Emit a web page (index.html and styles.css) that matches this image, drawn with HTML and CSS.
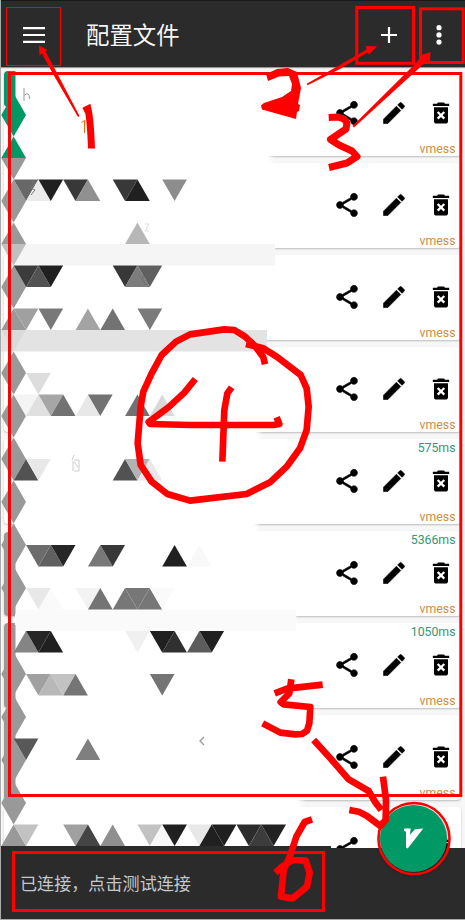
FILE: index.html
```html
<!DOCTYPE html>
<html lang="zh-CN">
<head>
<meta charset="utf-8">
<title>配置文件</title>
<link rel="stylesheet" href="styles.css">
</head>
<body>
<svg class="defs" width="0" height="0">
  <symbol id="share" viewBox="0 0 24 24"><path stroke="#000" stroke-width=".5" d="M18 16.08c-.76 0-1.44.3-1.96.77L8.91 12.7c.05-.23.09-.46.09-.7s-.04-.47-.09-.7l7.05-4.11c.54.5 1.25.81 2.04.81 1.66 0 3-1.34 3-3s-1.34-3-3-3-3 1.34-3 3c0 .24.04.47.09.7L8.04 9.81C7.5 9.31 6.79 9 6 9c-1.66 0-3 1.34-3 3s1.34 3 3 3c.79 0 1.5-.31 2.04-.81l7.12 4.16c-.05.21-.08.43-.08.65 0 1.61 1.31 2.92 2.92 2.92s2.92-1.31 2.92-2.92-1.31-2.92-2.92-2.92z"/></symbol>
  <symbol id="edit" viewBox="0 0 24 24"><path stroke="#000" stroke-width=".5" d="M3 17.25V21h3.75L17.81 9.94l-3.75-3.75L3 17.25zM20.71 7.04c.39-.39.39-1.02 0-1.41l-2.34-2.34c-.39-.39-1.02-.39-1.41 0l-1.83 1.83 3.75 3.75 1.83-1.83z"/></symbol>
  <symbol id="trash" viewBox="0 0 24 24"><path d="M6 19c0 1.1.9 2 2 2h8c1.1 0 2-.9 2-2V7H6v12zm2.46-7.12l1.41-1.41L12 12.59l2.12-2.12 1.41 1.41L13.41 14l2.12 2.12-1.41 1.41L12 15.41l-2.12 2.12-1.41-1.41L10.59 14l-2.13-2.12zM15.5 4l-1-1h-5l-1 1H5v2h14V4z"/></symbol>
</svg>
<div class="app">
  <header class="bar">
    <svg class="menu" viewBox="0 0 22 16"><path d="M0 1.2h22M0 8h22M0 14.8h22"/></svg>
    <h1>配置文件</h1>
    <svg class="plus" viewBox="0 0 16 16"><path d="M8 0v16M0 8h16"/></svg>
    <svg class="more" viewBox="0 0 6 20"><circle cx="3" cy="2.7" r="2.6"/><circle cx="3" cy="9.9" r="2.6"/><circle cx="3" cy="17.1" r="2.6"/></svg>
  </header>
  <main class="list" id="list"></main>
  <footer class="status">已连接，点击测试连接</footer>
  <svg class="layer" id="mosaic" viewBox="0 0 465 848"></svg>
  <button class="fab"><svg viewBox="0 0 60 62"><path d="M0 8V1H20L18 20L33 3L58 1L11 61L6 58V11Z"/></svg></button>
  <svg class="layer marks" viewBox="0 0 465 920">
    <rect x="6.5" y="7.5" width="54" height="58" stroke-width="1"/>
    <rect x="356.8" y="7.5" width="56.7" height="55.8"/>
    <rect x="420.5" y="8.8" width="42.7" height="53.7"/>
    <rect x="9.5" y="73.5" width="451.3" height="722"/>
    <rect x="13.5" y="852.5" width="310" height="58"/>
    <circle cx="414" cy="838.5" r="35.5" stroke-width="2.6"/>
    <g class="heads">
      <path d="M39 45.5L47.5 50L45.5 51.5L57 73L79.5 116L78 117L53 74L42 53.5L39.5 55.5Z"/>
      <path d="M377 46.5L369 54.5L367.5 52.5L340 69L307.5 85.3L306.7 83.7L338 66L366.5 49.5L365.5 46Z"/>
      <path d="M430.5 52L430 61.5L427 60.5L416 71L354 127.5L352.5 126L412 67L422 56.5L419.5 55.5Z"/>
      <path d="M266 74L277 69L288 68L297 72L301 88L298 104L300 105L299 111L297 112L296 119L262 109.5L261 105.5L264 103L282 97L291 91L292 84L289 76L279 76.5L268 81Z"/>
    </g>
    <path d="M81.5 122.5L84.5 120.5V133" stroke="#f60" stroke-width="1"/>
    <path stroke-width="7" d="M84 111L88 109Q90.5 120 91.5 148.5"/>
    <path stroke-width="7" stroke-linejoin="round" d="M328.7 117.5L338 117L344 119L347 123L346 129L340 133L330.5 139.5L339 145L352 151L357 156.5L347 163L329 167.5"/>
    <g class="thick" transform="translate(120 310) scale(.33333)">
      <path d="M435 163L430 142L405 108L375 80L343 60L313 58L210 73L168 95L125 135L95 190L70 245L62 290L53 400L62 465L95 515L142 552L210 572L380 552L450 517L500 470L540 415L560 360L566 290L560 235L542 195L470 140L430 115L378 102"/>
      <path d="M226 207L193 248L145 292L86 336L90 342L210 345L460 345L478 342L470 322M335 232L322 250L313 300L307 455"/>
    </g>
    <g class="thick" transform="translate(232 530) scale(.33333)">
      <path d="M178 448L172 490L146 516L155 523L235 531L232 580L225 602L210 612L190 613L145 608L92 580M128 490L165 476L272 464"/>
    </g>
    <g class="thick" transform="translate(232 720) scale(.33333)">
      <path d="M245 60L295 115L350 178L410 213L430 247L448 270M453 170L462 240L461 300L445 318L405 288L380 275L352 270"/>
      <path d="M240 298L218 306L193 350L175 405L155 450L147 530L182 535L225 500L233 458L221 422L182 420L150 440L130 458"/>
    </g>
  </svg>
</div>
<script src="script.js"></script>
</body>
</html>
```
FILE: styles.css
```css
* { box-sizing: border-box; }
body { margin: 0; font-family: Roboto, "Noto Sans CJK SC", sans-serif; }
.defs { position: absolute; }
.app {
  position: relative;
  width: 465px;
  height: 920px;
  display: flex;
  flex-direction: column;
  overflow: hidden;
  background: #f7f7f7;
  border-left: 1px solid #aaa;
}
.bar {
  flex: 0 0 67px;
  display: flex;
  align-items: center;
  padding: 1px 23px 0 22px;
  background: #2b2b2b;
  border-top: 1px solid #191919;
  box-shadow: 0 1px 1px #999;
  z-index: 1;
}
.bar h1 {
  flex: 1;
  margin: 2px 0 0 41px;
  font-size: 23.4px;
  line-height: 34px;
  font-weight: 400;
  color: #f5f5f5;
}
.bar svg { fill: #fff; stroke: #fff; stroke-width: 2.2; }
.menu { width: 22px; height: 16px; }
.plus { width: 16px; height: 16px; margin-right: 39px; }
.bar .more { width: 6px; height: 20px; stroke: none; }
.list {
  flex: 1;
  min-height: 0;
  overflow: hidden;
  display: flex;
  flex-direction: column;
  gap: 7px;
  padding: 4px 4px 0 3px;
}
.card {
  flex: 0 0 85px;
  display: flex;
  flex-direction: column;
  padding: 2px 5.5px 0;
  border-radius: 4px;
  background: #fff;
  box-shadow: 0 1px 2px #bbb;
  font-size: 12.3px;
  line-height: 14px;
  text-align: right;
}
.delay { height: 14px; color: #369477; }
.kind { height: 14px; margin-top: 14.5px; color: #cf8b41; }
.actions {
  display: flex;
  justify-content: flex-end;
  gap: 19px;
  height: 28px;
  margin-top: 12px;
  padding-right: .5px;
}
.actions svg { width: 28px; height: 28px; }
.status {
  flex: 0 0 72px;
  padding: 2px 20px 0 19px;
  font-size: 17.1px;
  line-height: 69px;
  color: #c4c8cb;
  background: #2b2b2b;
  border-bottom: 1px solid #aaa;
}
.layer {
  position: absolute;
  top: 0;
  left: -1px;
  width: 465px;
  height: 920px;
  z-index: 3;
  pointer-events: none;
}
#mosaic { height: 848px; z-index: 0; }
.marks { fill: none; stroke: #f00; stroke-width: 3; }
.heads { fill: #f00; stroke: none; }
.thick { stroke-width: 20; stroke-linejoin: round; }
.fab {
  position: absolute;
  left: 379px;
  top: 805px;
  width: 67px;
  height: 67px;
  padding: 0;
  border: 0;
  border-radius: 50%;
  background: #009966;
  box-shadow: 0 2px 4px #0008;
  z-index: 2;
}
.fab svg { display: block; width: 20px; height: 21px; margin: 0 auto; fill: #fff; }
```
FILE: script.js
```js
const delays = ['', '', '', '', '575ms', '5366ms', '1050ms', '', ''];
const icon = name => `<svg><use href="#${name}"/></svg>`;
// The last card is scrolled halfway under the status bar, so only its icons show.
document.getElementById('list').innerHTML = delays.map((delay, i) => `
  <section class="card">
    <div class="delay">${delay}</div>
    <div class="actions">${icon('share')}${icon('edit')}${icon('trash')}</div>
    <div class="kind">${i < delays.length - 1 ? 'vmess' : ''}</div>
  </section>`).join('');

// Triangular mosaic: row number -> "direction, column, colour".
const rows = {
  0: 'u0#096', 1: 'd0#096', 2: 'u0#096', 3: 'd0#999',
  4: 'u0#999 d1#686868 u2#ebebeb d3#202020 d5#383838 u6#909090 d9#383838 u10#202020 d13#8d8d8d',
  5: 'd0#999', 6: 'u0#999 u10#b7b7b7', 7: 'd0#c0c0c0',
  8: 'u0#999 d1#3c3c3c u2#525252 d3#202020 d9#383838 u10#7c7c7c d11#606060',
  9: 'd0#999', 10: 'u0#999 d1#a0a0a0 d3#787878 u6#a3a3a3 u8#737373 d11#7a7a7a',
  11: 'd0#dadada', 12: 'u0#999', 13: 'd0#999 d2#dddddd',
  14: 'u0#999 d1#f4f4f4 u2#e0e0e0 d3#a6a6a6 u4#727272 u6#e8e8e8 d7#727272 u10#727272 u12#d9d9d9',
  15: 'd0#999', 16: 'u0#999', 17: 'd0#999 u1#525252 d2#e8e8e8 u9#525252 d10#b3b3b3 u11#e8e8e8',
  18: 'u0#999', 19: 'd0#999', 20: 'u0#999',
  21: 'd0#999 d2#6c6c6c u3#606060 d4#262626 u7#787878 d8#383838 u13#202020 u15#f8f8f8',
  22: 'u0#999',
  23: 'd0#999 d2#e8e8e8 u3#fafafa d6#f3f3f3 u7#747474 u9#777 d10#777 u11#777 d12#fafafa',
  25: 'u1#858585 d2#262626 u3#202020 d10#f0f0f0 d12#202020 u13#303030 u15#5c5c5c d16#202020',
  26: 'u0#999', 27: 'd0#999 d2#a0a0a0 u3#b8b8b8 d4#c2c2c2 u5#757575 d12#747474',
  28: 'u0#999', 29: 'd0#999', 30: 'u0#999 d1#585858 u6#7f7f7f', 31: 'd0#999',
  32: 'u0#999', 33: 'd0#999',
  34: 'u0#999 d1#c2c2c2 d5#a0a0a0 u6#444 u8#8f8f8f d11#c2c2c2 u12#f8f8f8 d13#202020 d15#e8e8e8 u16#202020 d17#202020 d19#2c2c2c u20#3c3c3c d21#222'
};
const rect = (x, y, w, h, fill, extra = '') =>
  `<rect x="${x}" y="${y}" width="${w}" height="${h}" fill="${fill}" ${extra}/>`;
let art = '<defs><linearGradient id="fade"><stop offset=".97" stop-color="#fff"/><stop offset="1" stop-color="#fff" stop-opacity="0"/></linearGradient></defs>';
art += rect(4, 71, 22, 36, '#096', 'rx="4"');
[[532, 84], [623, 85], [715, 86]].forEach(([y, h]) => { art += rect(4, y, 24, h, '#999', 'rx="4"'); });
art += rect(15.5, 71, 230, 754, '#fff');
[[154, 275], [246, 277], [338, 268], [430, 263], [522, 261], [614, 299], [706, 314], [798, 306]]
  .forEach(([y, right]) => { art += rect(15, y, right - 15, 11, 'url(#fade)'); });
art += rect(14, 244, 261, 21.5, '#f5f5f5') + rect(1, 330, 266, 21.5, '#e3e3e3') + rect(16, 609.5, 280, 21.5, '#fafafa');
for (const [row, cells] of Object.entries(rows)) {
  const top = 93.5 + 21.5 * row, bottom = top + 21.5;
  for (const cell of cells.split(' ')) {
    const [, dir, col, fill] = cell.match(/([ud])(\d+)(#\w+)/);
    const x = 1.3 + 12.38 * col;
    const [base, tip] = dir === 'u' ? [bottom, top] : [top, bottom];
    art += `<path d="M${x} ${base}h24.7L${x + 12.35} ${tip}z" fill="${fill}"/>`;
  }
}
art += rect(1, 846, 330, 2, '#2b2b2b')
  + '<path d="M24 88v13M24.5 95q5-4 5 4" fill="none" stroke="#999"/>'
  + '<path d="M204 737l-4 4 4 4" fill="none" stroke="#999" stroke-width="1.3"/>'
  + '<path d="M145 224h4l-4 7h4" fill="none" stroke="#ddd"/>'
  + '<path d="M32 181l3 3-4 4 4 2-4 5" fill="none" stroke="#777"/>'
  + '<path d="M74 455l-2 5M73 461v10M74 460h5v11h-5M74 462l4 5" fill="none" stroke="#ccc"/>'
  + '<path d="M142 267l3 6-3 6 4 6" fill="none" stroke="#555" opacity=".4"/>';
document.getElementById('mosaic').innerHTML = art;
```
